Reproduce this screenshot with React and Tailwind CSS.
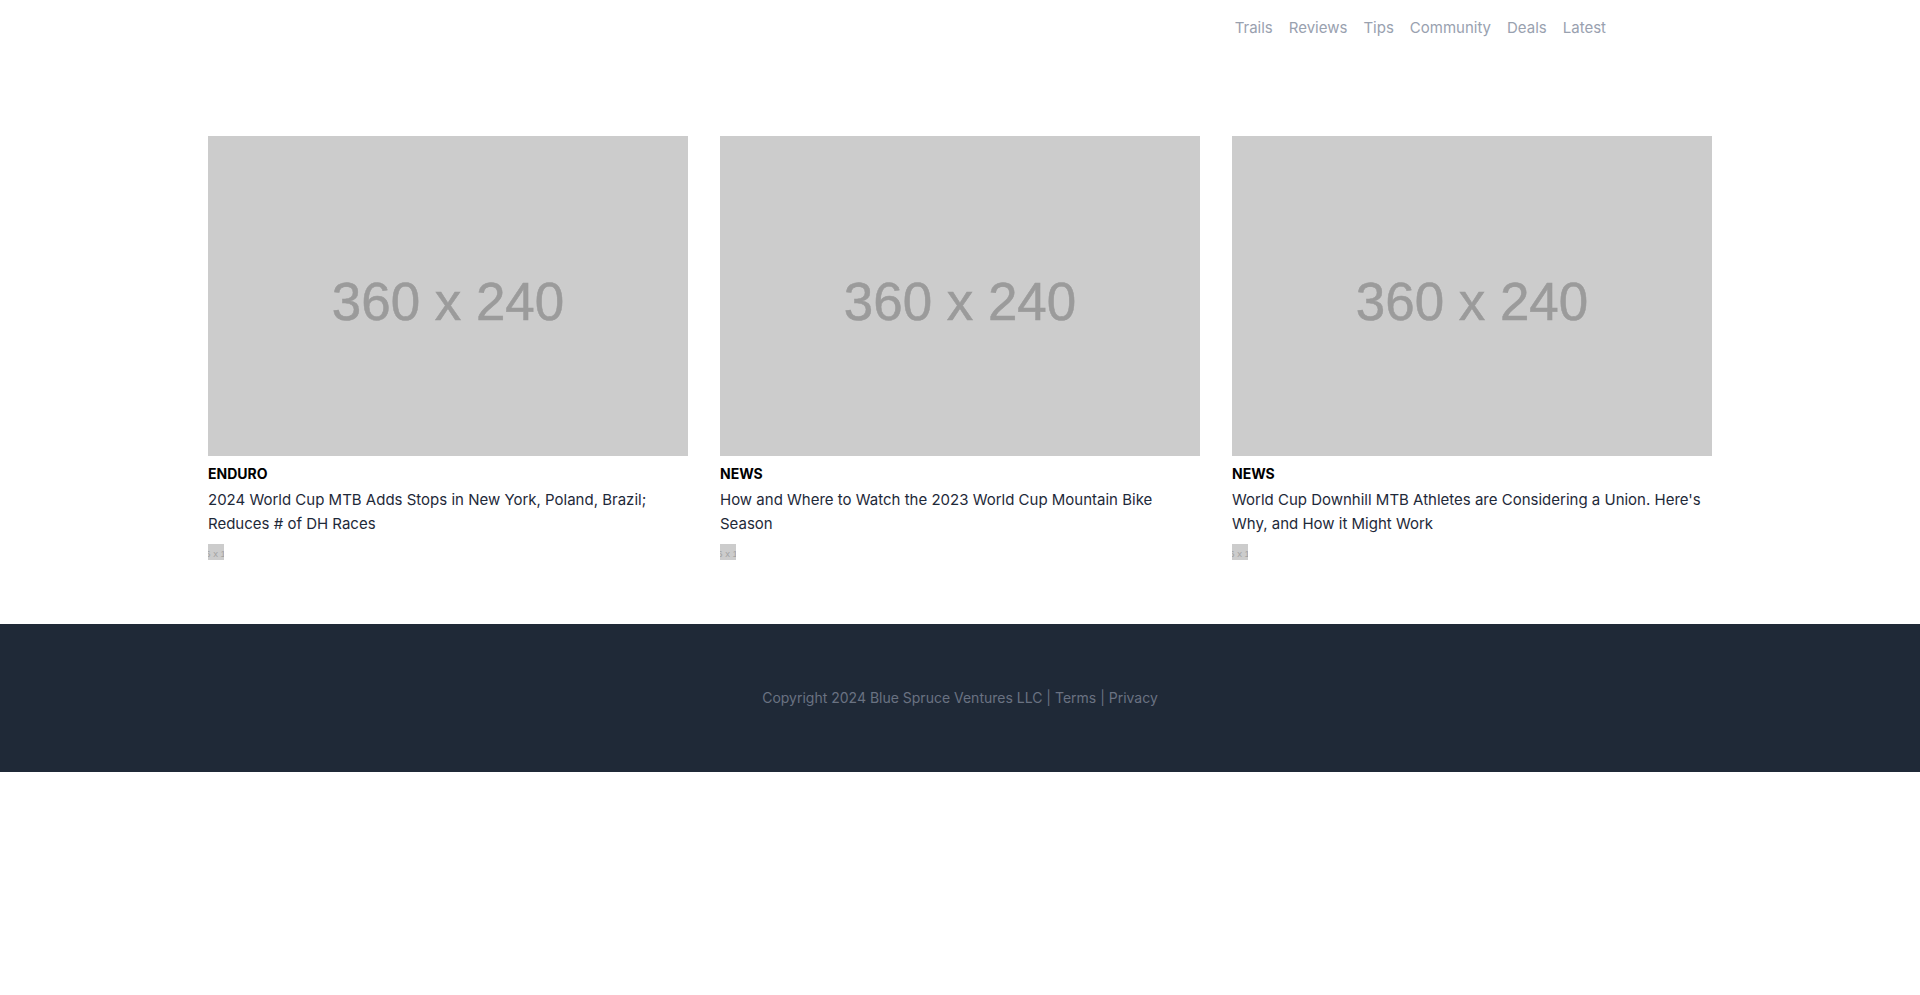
const links = ["Trails", "Reviews", "Tips", "Community", "Deals", "Latest"];

const articles = [
  {
    category: "Enduro",
    title: "2024 World Cup MTB Adds Stops in New York, Poland, Brazil; Reduces # of DH Races",
  },
  {
    category: "News",
    title: "How and Where to Watch the 2023 World Cup Mountain Bike Season",
  },
  {
    category: "News",
    title: "World Cup Downhill MTB Athletes are Considering a Union. Here's Why, and How it Might Work",
  },
];

function Cover() {
  return (
    <svg viewBox="0 0 360 240" className="block w-full" role="img" aria-label="360 x 240">
      <rect width="360" height="240" fill="#cccccc" />
      <text
        x="180"
        y="138"
        textAnchor="middle"
        fontFamily="'Liberation Sans', Arial, sans-serif"
        fontSize="39.7"
        fill="#9b9b9b"
        stroke="#9b9b9b"
        strokeWidth="0.4"
      >
        360 x 240
      </text>
    </svg>
  );
}

function Avatar() {
  return (
    <svg viewBox="0 0 16 16" className="mt-2 block size-4" role="img" aria-label="16 x 16">
      <rect width="16" height="16" fill="#cccccc" />
      <text
        x="7.5"
        y="13"
        textAnchor="middle"
        fontFamily="'Liberation Sans', Arial, sans-serif"
        fontSize="9.5"
        fill="#a3a3a3"
      >
        16 x 16
      </text>
    </svg>
  );
}

export default function App() {
  return (
    <div className="bg-white font-['Inter',sans-serif] text-black">
      <header className="mx-auto max-w-screen-2xl px-4 py-4">
        <nav className="flex justify-end gap-4 text-[15px] leading-6 text-gray-400 lg:pr-[106px]">
          {links.map((link) => (
            <a key={link} href="#">{link}</a>
          ))}
        </nav>
      </header>

      <main className="mx-auto grid max-w-screen-2xl gap-8 px-4 pt-20 pb-16 md:grid-cols-3">
        {articles.map(({ category, title }) => (
          <article key={title}>
            <Cover />
            <h2 className="mt-2 text-sm font-bold uppercase">{category}</h2>
            <a href="#" className="mt-1 block text-[15px] leading-6 text-gray-800">{title}</a>
            <Avatar />
          </article>
        ))}
      </main>

      <footer className="bg-[#1f2937] py-16 text-center text-sm text-gray-500">
        Copyright 2024 Blue Spruce Ventures LLC | <a href="#">Terms</a> | <a href="#">Privacy</a>
      </footer>
    </div>
  );
}
